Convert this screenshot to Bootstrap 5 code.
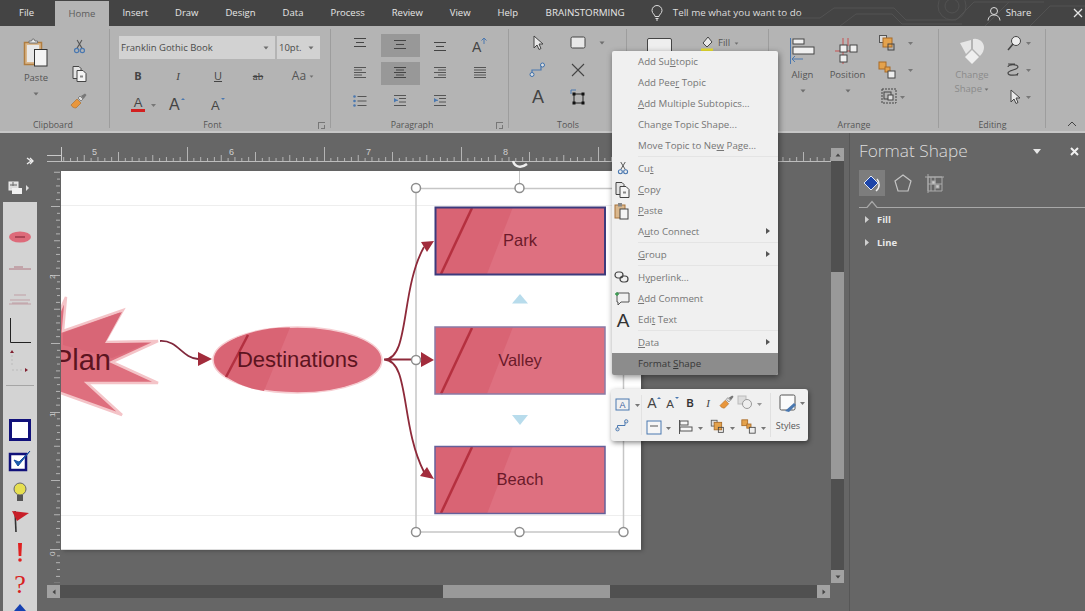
<!DOCTYPE html>
<html lang="en">
<head>
<meta charset="utf-8">
<title>Format Shape</title>
<link href="https://cdn.jsdelivr.net/npm/bootstrap@5.3.0/dist/css/bootstrap.min.css" rel="stylesheet">
<style>
html,body{margin:0;height:611px;overflow:hidden;background:#666}
body{width:1085px;position:relative;font-family:"Open Sans","Liberation Sans",sans-serif;font-size:10px;color:#444}
svg{display:block}
.topbar{height:26px;background:#444;position:relative;overflow:hidden}
.circuit{position:absolute;left:780px;top:0}
.tabline{position:relative;height:26px;align-items:stretch}
.tabline .nav-link{padding:0 13.5px;font-size:9.5px;line-height:26px;color:#e6e6e6;white-space:nowrap}
.tabline .nav-link:first-child{padding:0 21px 0 19px}
.tabline .nav-link.active{background:#b4b4b4;color:#5c5c5c;margin-top:1px;line-height:25px;padding:0 13.5px}
.tabline .nav-link.brainstorm{padding:0 13px 0 14px;font-size:9.8px}
.tellme{color:#ddd;font-size:9.8px;margin-left:13px;gap:10px;width:336px}
.sharebox{color:#e6e6e6;font-size:9.5px;gap:5px}
.closemark{margin-left:37px}
.ribbon{height:105px;background:#b4b4b4;border-bottom:0}
.ribbonrim{height:2px;background:#c6c6c6}
.rgroup{height:105px;position:relative;display:flex;flex-direction:column;flex:none}
.rgroup::after{content:"";position:absolute;right:0;top:3px;bottom:3px;width:1px;background:#9d9d9d}
.rbody{flex:1 1 auto;min-height:0}
.rlabel{height:12px;line-height:12px;font-size:8.8px;color:#555;text-align:center;position:relative}
.label-left{padding-right:4px}.label-left2{padding-right:16px}
.launch{position:absolute;right:6px;top:3px;width:7px;height:7px;border:1px solid #777;border-width:1px 0 0 1px}
.launch::after{content:"";position:absolute;right:0;bottom:0;width:4px;height:4px;border-right:1px solid #777;border-bottom:1px solid #777}
.g-clip{width:110px}.g-font{width:221px}.g-para{width:178px}.g-tools{width:118px}.g-shape{width:142px}.g-arr{width:170px}.g-edit{width:107px}
.pastecol{width:72px;padding-top:12px;align-items:center;display:flex;flex-direction:column}
.pastecol span{margin-top:5px;font-size:9.5px;line-height:12px;color:#555}
.clipcol{width:22px;margin-left:-4px;padding-top:7px;display:grid;grid-auto-rows:27px;justify-items:center;align-items:center}
.fontwrap{padding:10px 0 0 9px}
.combo{height:23px;background:#d2d2d2;color:#4a4a4a;font-size:9.5px;line-height:23px;padding-left:2px;display:flex;justify-content:space-between;align-items:center;padding-right:6px}
.combo-a{width:156px}.combo-b{width:43px;margin-left:2px}
.fontgrid{display:grid;grid-template-columns:40px 40px 40px 40px 50px;grid-auto-rows:28px;align-items:center;justify-items:center;margin-top:3px;margin-left:-1px}
.fontgrid b,.fontgrid i,.fontgrid u,.fontgrid s{font-size:11px;color:#444;font-family:"Liberation Serif",serif}
.fontgrid b{font-family:"Open Sans",sans-serif}
.fontgrid u{font-family:"Open Sans",sans-serif}
.aa{font-size:12px;line-height:1;white-space:nowrap;color:#555}
.grid-para{display:grid;grid-template-columns:repeat(4,40px);grid-auto-rows:28px;align-items:center;justify-items:center;padding:5px 0 0 9px}
.cellon{background:#989898;width:39px;height:23px;display:flex;align-items:center;justify-content:center}
.grid-tools{display:grid;grid-template-columns:40px 40px 8px;grid-auto-rows:27px;align-items:center;justify-items:center;padding:3px 0 0 9px}
.shaperow{padding:12px 0 0 20px;gap:28px;align-items:flex-start}
.swatch{width:25px;height:15px;background:#eee;border:1px solid #444;border-radius:2px}
.fillbtn{gap:4px;margin-top:-3px;font-size:9.5px;color:#555;align-items:center}
.bigbtn{width:45px;padding-top:12px}
.bigbtn span.lbl,.bigbtn2 span.lbl{font-size:9.5px;line-height:12px;color:#555;margin-top:5px}
.bigbtn2{width:66px;padding-top:12px}
.bigbtn2 span.lbl{color:#8b8b8b;margin-top:4px;line-height:14px;text-align:center}
.stackicons{display:grid;grid-auto-rows:27px;padding-top:3px;align-items:center}
.arrpad{padding-left:11px}
.workarea{height:478px}
.railcol{width:40px;flex:none;display:flex;flex-direction:column}
.railhead{height:69px;position:relative}
.stencil{margin-left:3px;width:34px;height:409px;background:#d3d3d3;overflow:hidden}
.docgrid{width:809px;flex:none;display:grid;grid-template-columns:21px 580px 190px 13px 5px;grid-template-rows:38px 378px 36px 13px 13px}
.hruler{grid-column:1/4;grid-row:1}
.vruler{grid-column:1;grid-row:2/4}
.drawpage{grid-column:2;grid-row:2;background:#fff;box-shadow:0 1px 0 #ddd,2px 2px 4px rgba(0,0,0,.25)}
.vbar{grid-column:4;grid-row:1/4;margin-top:15px;background:#505050;display:flex;flex-direction:column;height:435px}
.hbar{grid-column:1/4;grid-row:4;margin-left:7px;margin-right:1px;background:#505050;display:flex;width:783px}
.sbtn{flex:none;width:13px;height:13px;background:#a2a2a2;display:flex;align-items:center;justify-content:center}
.vgap-a{height:111px;flex:none}.vthumb{height:207px;background:#999;flex:none}
.hgap-a{width:383px;flex:none}.hthumb{width:167px;background:#999;flex:none}
.flexfill{flex:1 1 auto}
.taskpane{flex:1 1 auto;border-left:1px solid #575757;padding:7px 0 0 9px;color:#e0e0e0}
.panetitle{font-size:17.3px;line-height:22px;font-weight:300;color:#dcdcdc;width:226px;display:flex;justify-content:space-between;align-items:center}
.panectl{gap:29px;padding-right:6px}
.panetabs{gap:5px;margin-top:8px;align-items:center}
.tabbox{width:26px;height:26px;display:flex;align-items:center;justify-content:center}
.tabbox.on{background:#7d7d7d}
.panerule{margin:4px 0 5px}
.panerow{font-size:9.5px;font-weight:700;line-height:13px;color:#e8e8e8;gap:8px;margin-left:6px;align-items:center}
.panerow + .panerow{margin-top:10px}
.panerow::before{content:"";width:4px;height:7px;clip-path:polygon(0 0,100% 50%,0 100%);background:#cfcfcf}
.ctxmenu.dropdown-menu{display:block;position:absolute;left:612px;top:51px;width:166px;height:324px;padding:0;margin:0;background:#f0f0f0;border:0;border-radius:2px;box-shadow:1px 2px 6px rgba(0,0,0,.45);min-width:0;font-size:9.7px;z-index:5}
.ctxmenu .dropdown-item{height:21px;line-height:21px;padding:0 0 0 26px;color:#767676;position:relative;margin-left:0;font-size:9.7px}
.ctxmenu .dropdown-divider{margin:0 0 0 26px;height:2px;border-top:1px solid #e4e4e4;opacity:1}
.ctxmenu .dropdown-item.hot{background:#8c8c8c;color:#383838;border-radius:0 0 2px 2px;height:22px}
.ctxmenu .sub::after{content:"";position:absolute;right:8px;top:7px;border-left:4px solid #555;border-top:3.5px solid transparent;border-bottom:3.5px solid transparent}
.itemicon{position:absolute;left:2px;top:2px}
.itemicon.narrow{left:5px;top:3px}
.itemicon.tall{top:-2px}
.minibar{position:absolute;left:611px;top:389px;width:197px;height:52px;background:#f0f0f0;border-radius:3px;box-shadow:1px 2px 5px rgba(0,0,0,.45);z-index:5;overflow:hidden}
</style>
</head>
<body>
<svg width="0" height="0" class="position-absolute">
<defs>
<symbol id="i-cut" viewBox="0 0 16 18"><path d="M5 1l6 10M11 1L5 11" stroke="#555" stroke-width="1.300" fill="none"/><circle cx="4.500" cy="14" r="2.600" fill="none" stroke="#4a78b0" stroke-width="1.500"/><circle cx="11.500" cy="14" r="2.600" fill="none" stroke="#4a78b0" stroke-width="1.500"/></symbol>
<symbol id="i-copy" viewBox="0 0 16 18"><path d="M2 1.500h6l2 2v10H2z" fill="#e4e4e4" stroke="#444"/><path d="M6 5.500h6l3 3v8H6z" fill="#f4f4f4" stroke="#444"/><rect x="9" y="10.500" width="3" height="2" fill="#888"/></symbol>
<symbol id="i-brush" viewBox="0 0 18 16"><path d="M1 12l6-6 4 4-5 5c-2 0-4-1-5-3z" fill="#e8963c" stroke="#a86a26" stroke-width=".6"/><path d="M8 5l3 3 2-2-3-3z" fill="#ddd" stroke="#555" stroke-width=".6"/><path d="M11 3l4-2.500 1.500 1.500-3 4z" fill="#777"/></symbol>
<symbol id="i-paste-s" viewBox="0 0 16 18"><rect x="1" y="3" width="10" height="13" fill="#d9b78d" stroke="#a8733a"/><rect x="4" y="1" width="4" height="3.500" fill="#888"/><rect x="6" y="7" width="8" height="10" fill="#f4f4f4" stroke="#444"/></symbol>
<symbol id="i-line-t" viewBox="0 0 16 14"><path d="M2 2.500h12M4 6.500h8M2 10.500h12" stroke="#444" stroke-width="1.100"/></symbol>
<symbol id="i-l" viewBox="0 0 16 14"><path d="M2 1.500h12M2 4h8M2 6.500h12M2 9h8M2 11.500h12" stroke="#555" stroke-width="1"/></symbol>
<symbol id="i-c" viewBox="0 0 16 14"><path d="M2 1.500h12M4 4h8M2 6.500h12M4 9h8M2 11.500h12" stroke="#444" stroke-width="1"/></symbol>
<symbol id="i-r" viewBox="0 0 16 14"><path d="M2 1.500h12M6 4h8M2 6.500h12M6 9h8M2 11.500h12" stroke="#555" stroke-width="1"/></symbol>
<symbol id="i-j" viewBox="0 0 16 14"><path d="M2 1.500h12M2 4h12M2 6.500h12M2 9h12M2 11.500h12" stroke="#555" stroke-width="1"/></symbol>
<symbol id="i-bul" viewBox="0 0 16 14"><circle cx="2.500" cy="2.500" r="1.300" fill="#4a78b0"/><circle cx="2.500" cy="7" r="1.300" fill="#4a78b0"/><circle cx="2.500" cy="11.500" r="1.300" fill="#4a78b0"/><path d="M5.500 2.500h9M5.500 7h9M5.500 11.500h9" stroke="#555"/></symbol>
<symbol id="i-ind" viewBox="0 0 16 14"><path d="M2 1.500h12M7 4.500h7M7 8h7M2 11.500h12" stroke="#555"/><path d="M2 4l3.500 2.300L2 8.500z" fill="#4a78b0"/><path d="M3 6.300h3" stroke="#4a78b0"/></symbol>
<symbol id="i-ptr" viewBox="0 0 14 16"><path d="M3 1v12l3-3 2 4.500 2-1-2-4.500h4z" fill="#e9e9e9" stroke="#444" stroke-linejoin="round"/></symbol>
<symbol id="i-caret" viewBox="0 0 6 4"><path d="M.5.500h5L3 3.500z" fill="#6e6e6e"/></symbol>
<symbol id="i-conn" viewBox="0 0 18 16"><path d="M3 12.500V8h9V3" fill="none" stroke="#4a78b0" stroke-width="1.200"/><circle cx="3" cy="12.500" r="2" fill="#ddd" stroke="#3d70ad"/><circle cx="13.500" cy="3" r="2" fill="#ddd" stroke="#3d70ad"/></symbol>
<symbol id="i-layers" viewBox="0 0 18 18"><rect x="1.500" y="1.500" width="7" height="7" fill="#ddd" stroke="#555"/><rect x="5" y="4" width="9" height="9" fill="#e4a24c" stroke="#a86a26"/><rect x="10" y="10" width="6" height="6" fill="none" stroke="#444"/></symbol>
<symbol id="i-group" viewBox="0 0 18 18"><rect x="1" y="1" width="7" height="7" fill="#e4a24c" stroke="#a86a26"/><rect x="7" y="6" width="5" height="5" fill="#e4a24c" stroke="#a86a26"/><rect x="10" y="10" width="7" height="7" fill="#eee" stroke="#444"/></symbol>
</defs>
</svg>

<div class="topbar">
  <svg class="circuit" width="305" height="26" fill="none" stroke="#525252"><path d="M0 18h40l14-10h60l12 12h50l18-18h70"/><path d="M60 26l16-12h36l10 10h60M205 26l24-24M250 26l20-20h35"/><circle cx="172" cy="6" r="14"/><circle cx="172" cy="6" r="7"/></svg>
  <div class="nav tabline flex-nowrap">
    <a class="nav-link" href="#">File</a>
    <a class="nav-link active" href="#">Home</a>
    <a class="nav-link" href="#">Insert</a>
    <a class="nav-link" href="#">Draw</a>
    <a class="nav-link" href="#">Design</a>
    <a class="nav-link" href="#">Data</a>
    <a class="nav-link" href="#">Process</a>
    <a class="nav-link" href="#">Review</a>
    <a class="nav-link" href="#">View</a>
    <a class="nav-link" href="#">Help</a>
    <a class="nav-link brainstorm" href="#">BRAINSTORMING</a>
    <div class="d-flex align-items-center tellme">
      <svg width="12" height="16" viewBox="0 0 12 16" fill="none" stroke="#ddd"><path d="M4 11.500C4 9.500 1 8.500 1 5.500a5 5 0 0 1 10 0c0 3-3 4-3 6zM4.500 13.500h3M5 15h2"/></svg>
      <span>Tell me what you want to do</span>
    </div>
    <div class="d-flex align-items-center sharebox">
      <svg width="14" height="15" viewBox="0 0 14 15" fill="none" stroke="#ddd"><circle cx="7" cy="5" r="3.500"/><path d="M1 14.500c.5-4 3-5.500 6-5.500s5.500 1.500 6 5.500"/></svg>
      <span>Share</span>
      <svg class="closemark" width="10" height="10" viewBox="0 0 10 10"><path d="M1 1l8 8M9 1L1 9" stroke="#e6e6e6" stroke-width="1.300"/></svg>
    </div>
  </div>
</div>

<div class="ribbon d-flex">
  <div class="rgroup g-clip">
    <div class="rbody d-flex">
      <div class="pastecol">
        <svg width="26" height="29" viewBox="0 0 26 29"><rect x="1.500" y="4.500" width="17" height="22" fill="#d9b78d" stroke="#b07d3f" stroke-width="1.500"/><path d="M6 5V3h2.500l1-2h1.500l1 2h2.500v2z" fill="#e8e8e8" stroke="#777"/><rect x="4" y="7" width="12" height="17" fill="#e8e8e8"/><rect x="11.500" y="11.500" width="12.500" height="16.500" fill="#f4f4f4" stroke="#333"/></svg>
        <span>Paste</span>
        <svg class="mt-2" width="6" height="4"><use href="#i-caret"/></svg>
      </div>
      <div class="clipcol">
        <svg width="13" height="15"><use href="#i-cut"/></svg>
        <svg width="16" height="18"><use href="#i-copy"/></svg>
        <svg width="18" height="16"><use href="#i-brush"/></svg>
      </div>
    </div>
    <div class="rlabel label-left">Clipboard</div>
  </div>

  <div class="rgroup g-font">
    <div class="rbody fontwrap">
      <div class="d-flex">
        <div class="combo combo-a"><span>Franklin Gothic Book</span><svg width="6" height="4"><use href="#i-caret"/></svg></div>
        <div class="combo combo-b"><span>10pt.</span><svg width="6" height="4"><use href="#i-caret"/></svg></div>
      </div>
      <div class="fontgrid">
        <b>B</b><i>I</i><u>U</u><s>ab</s>
        <span class="aa">Aa <svg class="d-inline" width="5" height="3"><use href="#i-caret"/></svg></span>
        <svg width="40" height="20" viewBox="0 0 40 20"><text x="20" y="13" text-anchor="middle" font-size="13" fill="#444" font-family="Liberation Sans">A</text><rect x="13" y="15" width="14" height="3" fill="#d32020"/><path d="M33 10h5l-2.500 3z" fill="#777"/></svg>
        <svg width="24" height="20"><text x="3" y="16" font-size="16" fill="#444" font-family="Liberation Sans">A</text><path d="M15 6l2-2 2 2z" fill="#4a78b0"/></svg>
        <svg width="24" height="20"><text x="5" y="16" font-size="13" fill="#444" font-family="Liberation Sans">A</text><path d="M15 4h4l-2 2z" fill="#4a78b0"/></svg>
      </div>
    </div>
    <div class="rlabel label-left2">Font<i class="launch"></i></div>
  </div>

  <div class="rgroup g-para">
    <div class="rbody grid-para">
      <svg width="16" height="14" class="mb-1"><use href="#i-line-t"/></svg>
      <span class="cellon"><svg width="16" height="14"><use href="#i-line-t"/></svg></span>
      <svg width="16" height="14" class="mt-1"><use href="#i-line-t"/></svg>
      <svg width="18" height="18" viewBox="0 0 18 18"><text x="1" y="16" font-size="14" fill="#444" font-family="Liberation Sans">A</text><path d="M13 8V2M10.500 4.500L13 2l2.500 2.500" stroke="#4a78b0" fill="none"/></svg>
      <svg width="16" height="14"><use href="#i-l"/></svg>
      <span class="cellon"><svg width="16" height="14"><use href="#i-c"/></svg></span>
      <svg width="16" height="14"><use href="#i-r"/></svg>
      <svg width="16" height="14"><use href="#i-j"/></svg>
      <svg width="16" height="14"><use href="#i-bul"/></svg>
      <svg width="16" height="14"><use href="#i-ind"/></svg>
      <svg width="16" height="14"><use href="#i-ind"/></svg>
    </div>
    <div class="rlabel label-left2">Paragraph<i class="launch"></i></div>
  </div>

  <div class="rgroup g-tools">
    <div class="rbody grid-tools">
      <svg width="14" height="16"><use href="#i-ptr"/></svg>
      <svg width="16" height="13" viewBox="0 0 16 13"><rect x="1" y="1" width="14" height="11" rx="1.500" fill="#e8e8e8" stroke="#444"/></svg>
      <svg width="6" height="4"><use href="#i-caret"/></svg>
      <svg width="18" height="16"><use href="#i-conn"/></svg>
      <svg width="14" height="14" viewBox="0 0 14 14"><path d="M1 1l12 12M13 1L1 13" stroke="#444" stroke-width="1.100"/></svg>
      <span></span>
      <svg width="18" height="26" viewBox="0 0 18 26"><text x="9" y="19" text-anchor="middle" font-size="18" fill="#444" font-family="Liberation Sans">A</text></svg>
      <svg width="16" height="16" viewBox="0 0 16 16"><rect x="4" y="5" width="9" height="9" fill="none" stroke="#222"/><rect x="2.500" y="3.500" width="3" height="3" fill="#111"/><rect x="11.500" y="3.500" width="3" height="3" fill="#111"/><rect x="2.500" y="12.500" width="3" height="3" fill="#111"/><rect x="11.500" y="12.500" width="3" height="3" fill="#111"/><path d="M1 5V1h5" stroke="#4a78b0" fill="none"/></svg>
    </div>
    <div class="rlabel">Tools</div>
  </div>

  <div class="rgroup g-shape">
    <div class="rbody d-flex shaperow">
      <div class="swatch"></div>
      <div class="d-flex fillbtn">
        <svg width="14" height="17" viewBox="0 0 14 17"><path d="M3 8l5-6 4 5-5 5z" fill="#e8e8e8" stroke="#444"/><rect x="1" y="13.500" width="12" height="3" fill="#e9e030"/></svg>
        <span>Fill</span><svg width="5" height="3"><use href="#i-caret"/></svg>
      </div>
    </div>
    <div class="rlabel"></div>
  </div>

  <div class="rgroup g-arr">
    <div class="rbody d-flex arrpad">
      <div class="bigbtn d-flex flex-column align-items-center">
        <svg width="25" height="26" viewBox="0 0 25 26"><path d="M.5 0v26" stroke="#4a78b0"/><rect x="3" y="1" width="11" height="5" fill="#f0f0f0" stroke="#444"/><rect x="3" y="9" width="21" height="7" fill="#f0f0f0" stroke="#444"/><path d="M13 21H2M5 18l-3 3 3 3" stroke="#4a78b0" fill="none"/></svg>
        <span class="lbl">Align</span>
        <svg class="mt-2" width="6" height="4"><use href="#i-caret"/></svg>
      </div>
      <div class="bigbtn d-flex flex-column align-items-center">
        <svg width="25" height="26" viewBox="0 0 25 26"><path d="M8 0v26M0 13h16M13 0v8" stroke="#c85050"/><rect x="5" y="7" width="7" height="7" fill="#f0f0f0" stroke="#444"/><rect x="15" y="7" width="7" height="7" fill="#f0f0f0" stroke="#444"/><rect x="5" y="17" width="7" height="7" fill="#f0f0f0" stroke="#444"/></svg>
        <span class="lbl">Position</span>
        <svg class="mt-2" width="6" height="4"><use href="#i-caret"/></svg>
      </div>
      <div class="stackicons">
        <svg width="52" height="20" viewBox="0 0 52 20"><use href="#i-layers" x="8" y="1" width="18" height="18"/><path d="M38 9h5l-2.500 3z" fill="#777"/></svg>
        <svg width="52" height="20" viewBox="0 0 52 20"><use href="#i-group" x="8" y="1" width="18" height="18"/><path d="M38 9h5l-2.500 3z" fill="#777"/></svg>
        <svg width="52" height="20" viewBox="0 0 52 20"><rect x="12" y="2" width="14" height="14" fill="none" stroke="#444" stroke-dasharray="2 1"/><rect x="14" y="5" width="7" height="7" fill="none" stroke="#444"/><rect x="18" y="8" width="5" height="5" fill="#ddd" stroke="#444"/><path d="M30 9h5l-2.500 3z" fill="#777"/></svg>
      </div>
    </div>
    <div class="rlabel">Arrange</div>
  </div>

  <div class="rgroup g-edit">
    <div class="rbody d-flex">
      <div class="bigbtn2 d-flex flex-column align-items-center">
        <svg width="26" height="26" viewBox="0 0 26 26"><path d="M14 1a9 9 0 0 1 11 8c0 3-1 6-4 9l-7-7z" fill="#e6e6e6"/><path d="M1 5l11-3v9l-5 5z" fill="#e6e6e6"/><path d="M13 12l7 7-7 7-7-7z" fill="#efefef"/></svg>
        <span class="lbl">Change<br>Shape <svg class="d-inline" width="5" height="3"><use href="#i-caret"/></svg></span>
      </div>
      <div class="stackicons">
        <svg width="36" height="20" viewBox="0 0 36 20"><circle cx="11" cy="8" r="4.500" fill="#eee" stroke="#444"/><path d="M8 11l-5 6" stroke="#444" stroke-width="1.500"/><path d="M21 9h5l-2.500 3z" fill="#777"/></svg>
        <svg width="36" height="20" viewBox="0 0 36 20"><path d="M3 7c0-3 10-3 10 0s-10 3-10 6 10 3 10 0M3 4h7M6 15h7" fill="none" stroke="#444" stroke-width="1.200"/><path d="M21 9h5l-2.500 3z" fill="#777"/></svg>
        <svg width="36" height="20" viewBox="0 0 36 20"><use href="#i-ptr" x="3" y="2" width="14" height="16"/><path d="M21 9h5l-2.500 3z" fill="#777"/></svg>
      </div>
    </div>
    <div class="rlabel">Editing</div>
  </div>

  <div class="ms-auto align-self-end pb-1 pe-2"><svg width="10" height="6" viewBox="0 0 10 6"><path d="M1 5l4-4 4 4" fill="none" stroke="#444"/></svg></div>
</div>
<div class="ribbonrim"></div>

<div class="workarea d-flex">
  <div class="railcol">
    <div class="railhead">
      <svg width="40" height="69" viewBox="0 133 40 69"><path d="M27 158l4 3-4 3M30 158l3 3-3 3" fill="none" stroke="#eee" stroke-width="1.300"/><rect x="9" y="182" width="9" height="8" fill="#dcdcdc" stroke="#eee"/><path d="M10 185h7M13 182v4" stroke="#666"/><rect x="12" y="188" width="10" height="6" fill="#f0f0f0"/><path d="M26 185l3 3-3 3z" fill="#ddd"/></svg>
    </div>
    <div class="stencil">
      <svg width="34" height="409" viewBox="3 202 34 409">
        <ellipse cx="20" cy="237" rx="11" ry="5.500" fill="#dd6b7a"/><path d="M15 237h10" stroke="#7a2030"/>
        <path d="M14 267h9M9 269h22" stroke="#a85f6c" stroke-width=".8"/><path d="M14 295h12M10 300h20M12 303h16M9 304h22" stroke="#b98a92" stroke-width=".7"/>
        <path d="M10.500 318v24.500H31" fill="none" stroke="#222"/>
        <path d="M12 350l-2 3h4z" fill="#802030"/><path d="M12 355v10" stroke="#bbb" stroke-dasharray="2 2"/><path d="M12 370h12" stroke="#bbb" stroke-dasharray="2 2"/><path d="M25 368v4l3-2z" fill="#802030"/>
        <path d="M6 385.500h28" stroke="#a5a5a5"/>
        <rect x="10.500" y="420.500" width="19" height="19" fill="#fff" stroke="#11117a" stroke-width="3"/>
        <rect x="10" y="454" width="16" height="16" fill="#fff" stroke="#11117a" stroke-width="2.500"/><path d="M14 460l4 6 12-15-11 11z" fill="#1a60b0" stroke="#1a50a0"/>
        <circle cx="20" cy="489" r="6" fill="#e6df50" stroke="#666"/><rect x="17" y="495" width="6" height="6" fill="#555"/>
        <path d="M15 511l1 21" stroke="#333" stroke-width="1.600"/><path d="M12 511l17 2-12 8z" fill="#c81e28"/>
        <path d="M18 543h4l-.7 13h-2.600z" fill="#e02020"/><circle cx="20" cy="560" r="1.800" fill="#e02020"/>
        <text x="20" y="593" text-anchor="middle" font-size="26" fill="#d82020" font-family="Liberation Serif">?</text>
        <path d="M20 604l6 7H14z" fill="#1540b0"/>
      </svg>
    </div>
  </div>

  <div class="docgrid position-relative">
    <svg class="hruler" width="791" height="38" viewBox="40 133 791 38">
      <defs><pattern id="ht" x="50" y="147" width="137" height="14" patternUnits="userSpaceOnUse"><path d="M.5 0v14M6.850 11v3M13.700 10v4M20.550 11v3M27.400 10v4M34.250 8v6M41.100 11v3M47.950 10v4M54.800 11v3M61.650 10v4M68.500 5v9M75.350 11v3M82.200 10v4M89.050 11v3M95.900 10v4M102.750 8v6M109.600 11v3M116.450 10v4M123.300 11v3M130.150 10v4" stroke="#c8c8c8" stroke-width=".8"/></pattern></defs>
      <rect x="61" y="147" width="770" height="14" fill="url(#ht)"/>
      <path d="M47 161.500h784" stroke="#bdbdbd"/>
      <path d="M47 155.500h14M61.500 147v14" stroke="#c8c8c8"/>
      <g fill="#d0d0d0" font-size="9" font-family="Liberation Sans"><text x="92" y="155">5</text><text x="229" y="155">6</text><text x="366" y="155">7</text><text x="503" y="155">8</text></g>
    </svg>
    <svg class="vruler" width="21" height="414" viewBox="40 171 21 414">
      <defs><pattern id="vt" x="46" y="138" width="14" height="137" patternUnits="userSpaceOnUse"><path d="M14 .5H4M14 6.850h-3M14 13.700h-4M14 20.550h-3M14 27.400h-4M14 34.250h-6M14 41.100h-3M14 47.950h-4M14 54.800h-3M14 61.650h-4M14 68.500H5M14 75.350h-3M14 82.200h-4M14 89.050h-3M14 95.900h-4M14 102.750h-6M14 109.600h-3M14 116.450h-4M14 123.300h-3M14 130.150h-4" stroke="#c8c8c8" stroke-width=".8"/></pattern></defs>
      <rect x="46" y="171" width="14" height="412" fill="url(#vt)"/>
      <g fill="#d0d0d0" font-size="8" font-family="Liberation Sans"><text transform="translate(55 279) rotate(-90)">2</text><text transform="translate(55 417) rotate(-90)">1</text><text transform="translate(55 556) rotate(-90)">0</text></g>
    </svg>

    <svg class="drawpage overflow-visible" width="580" height="378" viewBox="61 171 580 378">
      <defs><clipPath id="pg"><rect x="61" y="171" width="580" height="378"/></clipPath></defs>
      <path d="M61 205.500h580M61 515.500h580" stroke="#eeeeee"/>
      <g clip-path="url(#pg)" font-family="Liberation Sans">
        <path d="M66 297L63 331L123 310L105 342L158 341L112 362L158 383L87 383L122 415L55 391L40 391L40 330L55 322Z" fill="#de6f7e" stroke="#f4c4c8" stroke-width="2.500" stroke-linejoin="miter"/>
        <path d="M63 333L122 312L105 343L148 343L112 358L63 345Z" fill="#d86676"/>
        <text x="111" y="370" text-anchor="end" font-size="29" fill="#5c1420">Plan</text>
      </g>
      <path d="M160 341C178 340 182 358 198 359" fill="none" stroke="#80283c" stroke-width="1.800"/>
      <path d="M198 352L212 359L198 366Z" fill="#a22c3c"/>
      <ellipse cx="297.500" cy="360" rx="84.500" ry="33" fill="#de7080" stroke="#f6ced2" stroke-width="1.500"/>
      <path d="M290 327.500C262 327 236 335 221.500 347C212 355 212 365 222 373C235 384 250 389 264 391Z" fill="#d96474"/>
      <path d="M248 335L226 377" stroke="#b33040" stroke-width="2.500"/>
      <text x="297.500" y="367" text-anchor="middle" font-size="22" fill="#5c1420" font-family="Liberation Sans">Destinations</text>
      <path d="M416 188.500H623.500V532H416Z" fill="none" stroke="#c6c6c6" stroke-width="1.500"/>
      <path d="M519.500 171v17" stroke="#c6c6c6"/>
      <path d="M384 359.500C410 360 400 290 424 247M384 359.500H422M384 359.500C410 360 400 425 424 472" fill="none" stroke="#8e2a3a" stroke-width="1.800"/>
      <path d="M421 242L434 241L427 252ZM421 352L434 360L421 367ZM420 476L434 479L427 467Z" fill="#a22c3c"/>
      <rect x="435.500" y="207.500" width="169.500" height="67" fill="#de7080"/>
      <path d="M435 207H513L487 274H435Z" fill="#d96474"/>
      <path d="M472 208L441 274" stroke="#b5303f" stroke-width="2.500"/>
      <rect x="435.500" y="207.500" width="169.500" height="67" fill="none" stroke="#3d3a7c" stroke-width="2"/>
      <text x="520" y="246" text-anchor="middle" font-size="16.500" fill="#6b1a2a" font-family="Liberation Sans">Park</text>
      <rect x="435" y="327" width="170" height="67" fill="#de7080"/>
      <path d="M435 327H513L487 394H435Z" fill="#d96474"/>
      <path d="M472 328L441 394" stroke="#b5303f" stroke-width="2.500"/>
      <rect x="435" y="327" width="170" height="67" fill="none" stroke="#8a7ba6" stroke-width="1.500"/>
      <text x="520" y="366" text-anchor="middle" font-size="16.500" fill="#6b1a2a" font-family="Liberation Sans">Valley</text>
      <rect x="435" y="446.500" width="170" height="67" fill="#de7080"/>
      <path d="M435 446H513L487 514H435Z" fill="#d96474"/>
      <path d="M472 447L441 513" stroke="#b5303f" stroke-width="2.500"/>
      <rect x="435" y="446.500" width="170" height="67" fill="none" stroke="#65609a" stroke-width="1.500"/>
      <text x="520" y="485" text-anchor="middle" font-size="16.500" fill="#6b1a2a" font-family="Liberation Sans">Beach</text>
      <path d="M520 294L528 303.500H512Z" fill="#b8dcec"/>
      <path d="M512 415H528L520 425Z" fill="#b8dcec"/>
      <g fill="#fff" stroke="#8e8e8e" stroke-width="1.500"><circle cx="416" cy="188" r="4.500"/><circle cx="519.500" cy="188" r="4.500"/><circle cx="623.500" cy="188" r="4.500"/><circle cx="416" cy="360" r="4.500"/><circle cx="416" cy="532" r="4.500"/><circle cx="519.500" cy="532" r="4.500"/><circle cx="623.500" cy="532" r="4.500"/></g>
      <path d="M513 161C515 168 522 168 527 164" fill="none" stroke="#eeeeee" stroke-width="2.500"/>
    </svg>

    <div class="vbar">
      <span class="sbtn"><svg width="6" height="4" viewBox="0 0 6 4"><path d="M.5 3.500h5L3 .500z" fill="#444"/></svg></span>
      <span class="vgap-a"></span><span class="vthumb"></span><span class="flexfill"></span>
      <span class="sbtn"><svg width="6" height="4" viewBox="0 0 6 4"><path d="M.5.500h5L3 3.500z" fill="#444"/></svg></span>
    </div>
    <div class="hbar">
      <span class="sbtn"><svg width="4" height="6" viewBox="0 0 4 6"><path d="M3.500.500v5L.5 3z" fill="#444"/></svg></span>
      <span class="hgap-a"></span><span class="hthumb"></span><span class="flexfill"></span>
      <span class="sbtn"><svg width="4" height="6" viewBox="0 0 4 6"><path d="M.5.500v5L3.500 3z" fill="#444"/></svg></span>
    </div>
  </div>

  <div class="taskpane">
    <div class="panetitle"><span>Format Shape</span>
      <span class="d-flex align-items-center panectl"><svg width="8" height="5" viewBox="0 0 8 5"><path d="M0 0h8L4 5z" fill="#e8e8e8"/></svg><svg width="9" height="9" viewBox="0 0 9 9"><path d="M1 1l7 7M8 1L1 8" stroke="#f0f0f0" stroke-width="2"/></svg></span>
    </div>
    <div class="d-flex panetabs">
      <span class="tabbox on"><svg width="20" height="20" viewBox="0 0 20 20"><path d="M9 3l7 7-7 7-7-7z" fill="#1c44a8" stroke="#dfe6f4"/><path d="M15 6c3 3 3 9-1 12" fill="none" stroke="#eee" stroke-width="1.500"/></svg></span>
      <span class="tabbox"><svg width="20" height="20" viewBox="0 0 20 20"><path d="M10 2l8 6-3 10H5L2 8z" fill="none" stroke="#c4c4c4" stroke-width="1.200"/></svg></span>
      <span class="tabbox"><svg width="20" height="20" viewBox="0 0 20 20" fill="none" stroke="#aaa"><path d="M4 4h14v14H4zM4 1v19M1 4h19M11 4v14M4 11h14M7 4v14"/><rect x="8" y="8" width="3" height="3" fill="#ccc"/><rect x="12" y="12" width="3" height="3" fill="#ccc"/></svg></span>
    </div>
    <svg class="panerule" width="227" height="8" viewBox="0 0 227 8"><path d="M0 7.500h8l5-6 5 6h209" fill="none" stroke="#a8a8a8" stroke-width="1.200"/></svg>
    <div class="d-flex panerow"><span>Fill</span></div>
    <div class="d-flex panerow"><span>Line</span></div>
  </div>
</div>

<div class="ctxmenu dropdown-menu show">
  <a class="dropdown-item" href="#">Add Su<u>b</u>topic</a>
  <a class="dropdown-item" href="#">Add Pee<u>r</u> Topic</a>
  <a class="dropdown-item" href="#"><u>A</u>dd Multiple Subtopics...</a>
  <a class="dropdown-item" href="#">Chan<u>g</u>e Topic Shape...</a>
  <a class="dropdown-item" href="#">Move Topic to Ne<u>w</u> Page...</a>
  <hr class="dropdown-divider">
  <a class="dropdown-item" href="#"><svg class="itemicon narrow" width="12" height="14"><use href="#i-cut"/></svg>Cu<u>t</u></a>
  <a class="dropdown-item" href="#"><svg class="itemicon" width="16" height="18"><use href="#i-copy"/></svg><u>C</u>opy</a>
  <a class="dropdown-item" href="#"><svg class="itemicon" width="16" height="18"><use href="#i-paste-s"/></svg><u>P</u>aste</a>
  <a class="dropdown-item sub" href="#">A<u>u</u>to Connect</a>
  <hr class="dropdown-divider">
  <a class="dropdown-item sub" href="#"><u>G</u>roup</a>
  <hr class="dropdown-divider">
  <a class="dropdown-item" href="#"><svg class="itemicon" width="16" height="16" viewBox="0 0 16 16" fill="none" stroke="#444" stroke-width="1.200"><rect x="1" y="3" width="8" height="6" rx="3"/><rect x="6" y="7" width="8" height="6" rx="3"/></svg>H<u>y</u>perlink...</a>
  <a class="dropdown-item" href="#"><svg class="itemicon" width="16" height="16" viewBox="0 0 16 16" fill="none"><path d="M3 3h12v9H7l-3 3v-3H3z" stroke="#555"/><path d="M1 4h4M3 2v4" stroke="#3a9a50" stroke-width="1.300"/></svg><u>A</u>dd Comment</a>
  <a class="dropdown-item" href="#"><svg class="itemicon tall" width="18" height="26" viewBox="0 0 18 26"><text x="9" y="20" text-anchor="middle" font-size="19" fill="#333" font-family="Liberation Sans">A</text></svg>Edi<u>t</u> Text</a>
  <hr class="dropdown-divider">
  <a class="dropdown-item sub" href="#"><u>D</u>ata</a>
  <a class="dropdown-item hot" href="#">Format <u>S</u>hape</a>
</div>

<div class="minibar">
  <svg width="197" height="52" viewBox="611 389 197 52" font-family="Liberation Sans">
    <rect x="616" y="399" width="13" height="11" fill="none" stroke="#4a78b0"/><text x="622.500" y="408" text-anchor="middle" font-size="9" fill="#3d62a0">A</text>
    <path d="M635 404h5l-2.500 3z" fill="#777"/>
    <text x="652" y="408" text-anchor="middle" font-size="14" fill="#444">A</text><path d="M657 399l2-2 2 2z" fill="#4a78b0"/>
    <text x="670" y="408" text-anchor="middle" font-size="11.500" fill="#444">A</text><path d="M675 397h4l-2 2z" fill="#4a78b0"/>
    <text x="690" y="407" text-anchor="middle" font-size="10" font-weight="700" fill="#333">B</text>
    <text x="708" y="407" text-anchor="middle" font-size="11" font-style="italic" fill="#444" font-family="Liberation Serif">I</text>
    <use href="#i-brush" x="719" y="395" width="16" height="14"/>
    <rect x="738" y="396" width="8" height="8" fill="#ddd" stroke="#bbb"/><circle cx="747" cy="404" r="4.500" fill="#eee" stroke="#999"/>
    <path d="M757 403h5l-2.500 3z" fill="#999"/>
    <use href="#i-conn" x="615" y="418" width="15" height="15"/>
    <rect x="647" y="421" width="14" height="13" fill="#f6f6f6" stroke="#4a78b0"/><path d="M650 426h8" stroke="#555"/>
    <path d="M666 427h5l-2.500 3z" fill="#777"/>
    <path d="M679.500 420v14" stroke="#555"/><rect x="680" y="421" width="8" height="4" fill="#f6f6f6" stroke="#555"/><rect x="680" y="427" width="12" height="4" fill="#f6f6f6" stroke="#555"/>
    <path d="M698 427h5l-2.500 3z" fill="#777"/>
    <use href="#i-layers" x="710" y="419" width="15" height="15"/>
    <path d="M730 427h5l-2.500 3z" fill="#777"/>
    <use href="#i-group" x="741" y="419" width="15" height="15"/>
    <path d="M761 427h5l-2.500 3z" fill="#777"/>
    <path d="M641.500 395v40" stroke="#e2e2e2"/><path d="M770.500 393v44" stroke="#e0e0e0"/>
    <rect x="780" y="395" width="15" height="15" rx="1.500" fill="#fbfbfb" stroke="#555"/><path d="M785 411l9-8 2 2-7 7z" fill="#4a78b0"/>
    <path d="M800 402h5l-2.500 3z" fill="#777"/>
    <text x="788" y="429" text-anchor="middle" font-size="9" fill="#555" font-family="Open Sans">Styles</text>
  </svg>
</div>

<script src="https://cdn.jsdelivr.net/npm/bootstrap@5.3.0/dist/js/bootstrap.bundle.min.js"></script>
</body>
</html>
